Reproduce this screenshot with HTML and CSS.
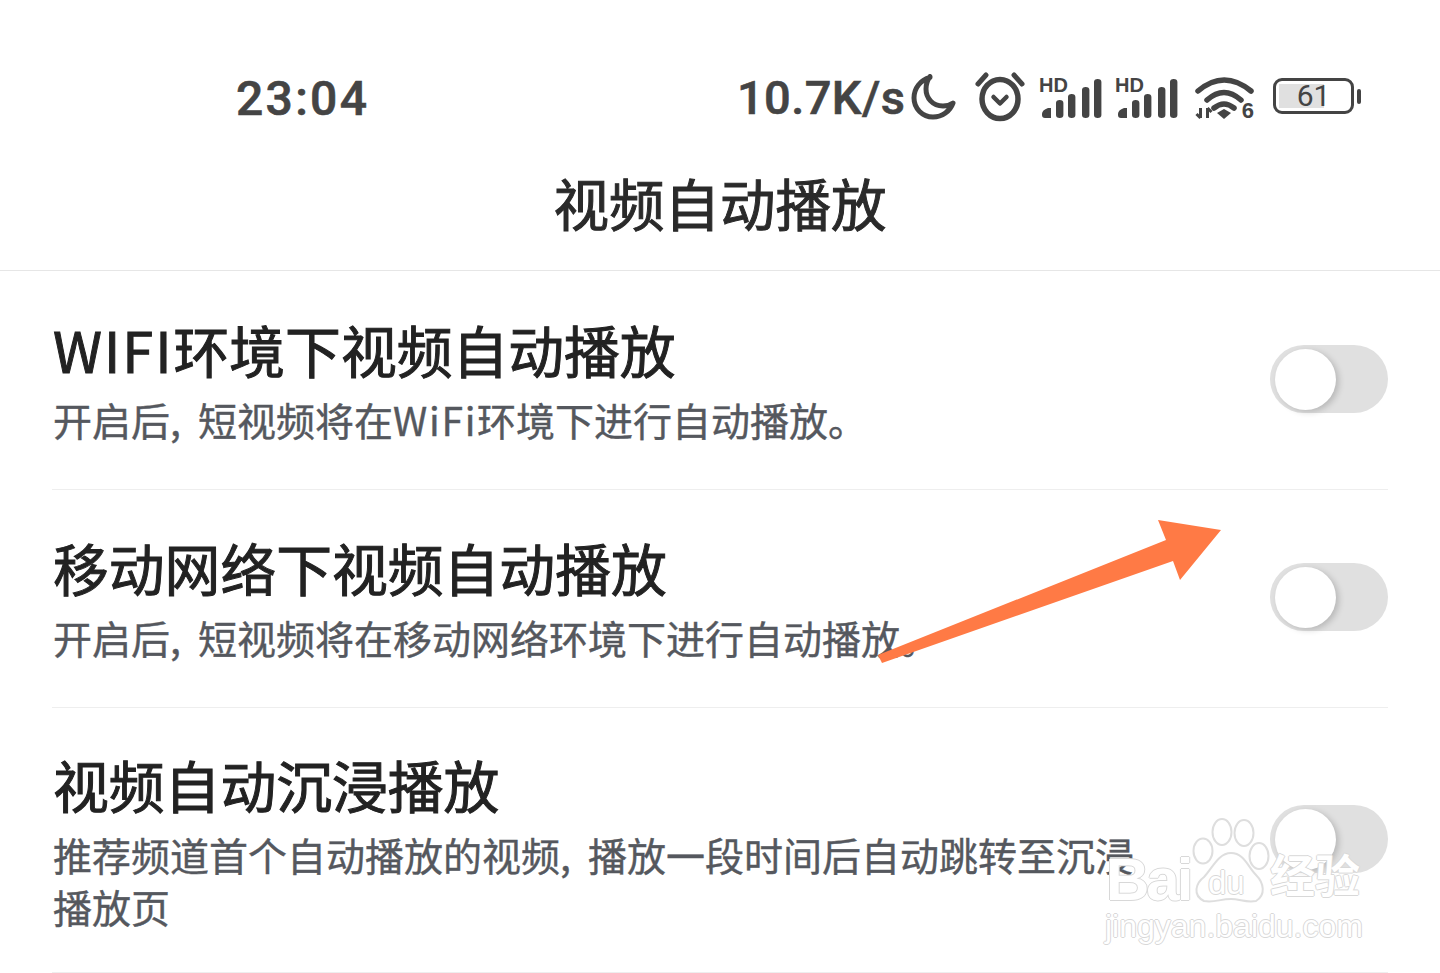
FILE: index.html
```html
<!DOCTYPE html>
<html lang="zh">
<head>
<meta charset="utf-8">
<title>视频自动播放</title>
<link rel="stylesheet" href="styles.css">
</head>
<body>
<div class="page">
  <div class="status">
    <span class="time">23:04</span>
    <div class="status-right">
      <span class="speed">10.7K/s</span>
      <svg class="ic-moon" width="46" height="46" viewBox="0 0 46 46"><path d="M19 3.500C9.500 6 3 14 3 24c0 10.500 8.500 19 19 19 9.500 0 17-6 20-14-3 2-6.500 3-10 3-10.500 0-17-8-17-17 0-4.500 1.500-9 4-12.500Z" fill="none" stroke="#444" stroke-width="5" stroke-linejoin="round"/></svg>
      <svg class="ic-alarm" width="50" height="50" viewBox="0 0 50 50"><ellipse cx="25" cy="27" rx="18" ry="19.500" fill="none" stroke="#444" stroke-width="5.500"/><path d="M18.500 25l6.500 6.500 6.500-6.500" fill="none" stroke="#444" stroke-width="4.500" stroke-linecap="round" stroke-linejoin="round"/><path d="M3 12 11 3M47 12 39 3" stroke="#444" stroke-width="5" stroke-linecap="round"/></svg>
      <div class="signal">
        <span class="hd">HD</span>
        <svg width="63" height="42" viewBox="0 0 63 42"><path d="M2 37q0-4 6-6h3v10H5q-3 0-3-3ZM16 26q0-3 3.700-3t3.700 3v12q0 3-3.700 3T16 38ZM28 20q0-3 3.700-3t3.700 3v18q0 3-3.700 3T28 38ZM42 13q0-3 3.700-3t3.700 3v25q0 3-3.700 3T42 38ZM54 5q0-3 3.700-3t3.700 3v33q0 3-3.700 3T54 38Z" fill="#444"/></svg>
      </div>
      <div class="signal signal-two">
        <span class="hd">HD</span>
        <svg width="63" height="42" viewBox="0 0 63 42"><path d="M2 37q0-4 6-6h3v10H5q-3 0-3-3ZM16 26q0-3 3.700-3t3.700 3v12q0 3-3.700 3T16 38ZM28 20q0-3 3.700-3t3.700 3v18q0 3-3.700 3T28 38ZM42 13q0-3 3.700-3t3.700 3v25q0 3-3.700 3T42 38ZM54 5q0-3 3.700-3t3.700 3v33q0 3-3.700 3T54 38Z" fill="#444"/></svg>
      </div>
      <div class="wifi">
        <svg width="60" height="44" viewBox="0 0 60 44"><path d="M3 15Q29-7 56 15M12 24Q29 9 46 24M19 32Q29 24 39 32" fill="none" stroke="#444" stroke-width="5.500" stroke-linecap="round"/><path d="M22 37l7-4 7 4-7 6Z" fill="#444"/><path d="M5.500 32v10M1.500 38l4 4M12.500 42V32M12.500 32l4 4" fill="none" stroke="#444" stroke-width="3"/></svg>
        <span class="wifi-six">6</span>
      </div>
      <div class="battery">
        <div class="battery-body"><span class="battery-fill"></span><span class="battery-num">61</span></div>
        <span class="battery-cap"></span>
      </div>
    </div>
  </div>
  <header class="title-bar"><h1>视频自动播放</h1></header>
  <section class="row row-first">
    <div class="row-text">
      <h2><span class="latin-title">WIFI</span>环境下视频自动播放</h2>
      <p>开启后<span class="comma">,</span>短视频将在<span class="latin-sub">WiFi</span>环境下进行自动播放。</p>
    </div>
    <span class="toggle"><span class="knob"></span></span>
  </section>
  <section class="row">
    <div class="row-text">
      <h2>移动网络下视频自动播放</h2>
      <p>开启后<span class="comma">,</span>短视频将在移动网络环境下进行自动播放。</p>
    </div>
    <span class="toggle"><span class="knob"></span></span>
  </section>
  <section class="row row-tall">
    <div class="row-text">
      <h2>视频自动沉浸播放</h2>
      <p>推荐频道首个自动播放的视频<span class="comma">,</span>播放一段时间后自动跳转至沉浸<br>播放页</p>
    </div>
    <span class="toggle"><span class="knob"></span></span>
  </section>
  <svg class="arrow" width="360" height="160" viewBox="0 0 360 160"><path d="M0 138 288 23 280 3 343 13 302 63 295 44 4 146Z" fill="#ff7a45"/></svg>
  <div class="watermark">
    <svg class="paw" width="90" height="90" viewBox="0 0 90 90"><g fill="none" stroke="#dedede" stroke-width="2"><ellipse cx="13" cy="36" rx="9.500" ry="12.500"/><ellipse cx="32" cy="17" rx="9.500" ry="13"/><ellipse cx="54" cy="18" rx="9.500" ry="13"/><ellipse cx="69" cy="41" rx="9.500" ry="13"/><path d="M14 86C2 80 6 68 14 62 22 54 28 38 41 38 54 38 58 52 66 60 74 68 76 80 66 86 56 88 50 84 41 84 30 84 24 88 14 86Z" fill="rgba(255,255,255,.55)"/></g></svg>
    <span class="wm-bai">Bai</span>
    <span class="wm-du">du</span>
    <span class="wm-jy">经验</span>
    <span class="wm-url">jingyan.baidu.com</span>
  </div>
</div>
</body>
</html>
```
FILE: styles.css
```css
* { box-sizing: border-box; }
html, body { margin: 0; padding: 0; background: #fff; }
.page {
  position: relative;
  width: 1440px;
  height: 973px;
  overflow: hidden;
  background: #fff;
  font-family: "Noto Sans CJK SC", "Noto Sans", sans-serif;
}
.status {
  height: 150px;
  display: flex;
  align-items: flex-start;
  padding: 72px 0 0 236px;
  color: #444;
}
.time {
  width: 374px;
  margin-top: 2px;
  font-family: Roboto, sans-serif;
  font-weight: 500;
  font-size: 48px;
  line-height: 50px;
  letter-spacing: 2.300px;
  -webkit-text-stroke: 0.6px #444;
}
.status-right {
  margin-left: 127px;
  display: flex;
  align-items: flex-start;
}
.speed {
  margin-top: 1px;
  font-family: Roboto, sans-serif;
  font-weight: 500;
  font-size: 47px;
  line-height: 50px;
  letter-spacing: 0.400px;
  width: 174px;
  -webkit-text-stroke: 0.6px #444;
}
.ic-moon { margin-top: 2px; }
.ic-alarm { margin-left: 18px; }
.signal { position: relative; margin: 4px 0 0 15px; width: 63px; height: 44px; }
.signal-two { margin-left: 13px; }
.signal svg { display: block; margin-top: 1px; }
.hd {
  position: absolute;
  left: -1px;
  top: 0;
  font-family: "Liberation Sans", sans-serif;
  font-weight: 700;
  font-size: 20px;
  line-height: 18px;
}
.wifi { position: relative; margin: 4px 0 0 16px; width: 60px; height: 44px; }
.wifi svg { display: block; }
.wifi-six {
  position: absolute;
  right: 1px;
  bottom: 0;
  font-family: "Liberation Sans", sans-serif;
  font-weight: 700;
  font-size: 22px;
  line-height: 19px;
}
.battery { margin: 6px 0 0 18px; display: flex; align-items: center; gap: 3px; }
.battery-body {
  position: relative;
  width: 81px;
  height: 36px;
  border: 3.500px solid #444;
  border-radius: 9px;
  padding: 3px;
}
.battery-fill { display: block; width: 45px; height: 100%; background: #e0e0e0; }
.battery-num {
  position: absolute;
  inset: 0;
  text-align: center;
  font-family: Roboto, sans-serif;
  font-size: 30px;
  line-height: 30px;
  color: #444;
}
.battery-cap { width: 4px; height: 15px; border-radius: 2px; background: #444; }
.title-bar {
  height: 121px;
  border-bottom: 1.500px solid #e6e6e6;
  text-align: center;
}
.title-bar h1 {
  margin: 0;
  padding-top: 12px;
  font-size: 55.500px;
  line-height: 80px;
  font-weight: 400;
  color: #2a2a2a;
  -webkit-text-stroke: 1px #2a2a2a;
}
.row {
  margin: 0 52px;
  height: 218px;
  padding-top: 39px;
  display: flex;
  justify-content: space-between;
  border-bottom: 1px solid #eee;
}
.row-first { height: 219px; padding-top: 40px; }
.row-tall { height: 265px; padding-top: 38px; }
.row-text { padding-left: 1px; }
.row-text h2 {
  margin: 0;
  font-size: 55.800px;
  line-height: 76px;
  font-weight: 400;
  color: #222;
  -webkit-text-stroke: 1px #222;
}
.latin-title { letter-spacing: 2px; }
.latin-sub { letter-spacing: 1.700px; }
.row-text p {
  margin: 6px 0 0;
  font-size: 39px;
  line-height: 52px;
  color: #55585e;
  white-space: nowrap;
  -webkit-text-stroke: 0.4px #55585e;
}
.comma { display: inline-block; width: 28px; }
.toggle {
  position: relative;
  flex: none;
  margin-top: 34px;
  width: 118px;
  height: 68px;
  border-radius: 34px;
  background: #e0e0e0;
}
.row-tall .toggle { margin-top: 59px; }
.knob {
  position: absolute;
  left: 5px;
  top: 4px;
  width: 61px;
  height: 61px;
  border-radius: 50%;
  background: #fff;
  box-shadow: 3px 2px 6px rgba(0, 0, 0, 0.18);
}
.arrow { position: absolute; left: 878px; top: 517px; }
.watermark {
  position: absolute;
  left: 1100px;
  top: 815px;
  width: 270px;
  height: 130px;
}
.paw { position: absolute; left: 90px; top: 0; }
.wm-bai, .wm-du, .wm-jy, .wm-url {
  position: absolute;
  white-space: nowrap;
  font-family: "Liberation Sans", "Noto Sans CJK SC", sans-serif;
  color: #fff;
  text-shadow: 1px 0 0 #d8d8d8, -1px 0 0 #d8d8d8, 0 1px 0 #d8d8d8, 0 -1px 0 #d8d8d8;
}
.wm-bai { left: 6px; top: 32px; font-size: 60px; line-height: 66px; font-weight: 700; letter-spacing: -3px; }
.wm-du { left: 108px; top: 50px; font-size: 33px; line-height: 36px; }
.wm-jy { left: 170px; top: 35px; font-size: 45px; line-height: 56px; font-weight: 700; }
.wm-url { left: 5px; top: 92px; font-size: 32px; line-height: 38px; }
```
